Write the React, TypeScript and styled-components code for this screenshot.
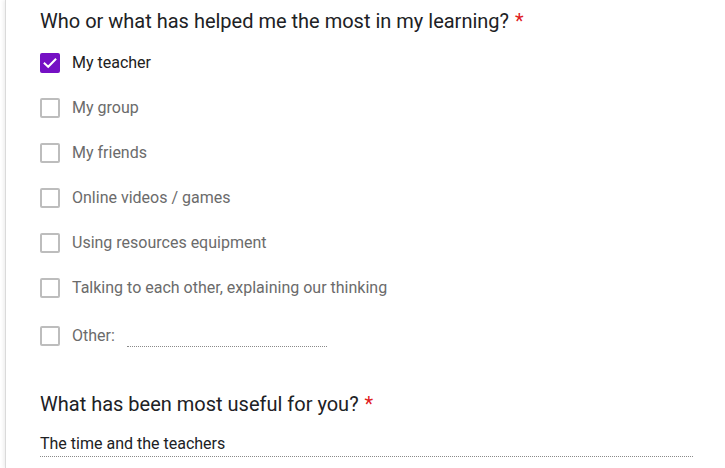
import React from "react";
import styled, { createGlobalStyle } from "styled-components";

const GlobalStyle = createGlobalStyle`
  html, body {
    margin: 0;
    padding: 0;
    background: #ffffff;
  }
  body {
    font-family: Roboto, "Liberation Sans", Arial, sans-serif;
    -webkit-font-smoothing: antialiased;
  }
`;

const Page = styled.div`
  width: 725px;
  height: 468px;
  overflow: hidden;
  padding-left: 5px;
  box-sizing: border-box;
  background: #ffffff;
`;

const Card = styled.div`
  height: 100%;
  background: #ffffff;
  border-left: 1px solid #dadada;
  box-shadow: -2px 0 3px rgba(0, 0, 0, 0.06);
  padding: 9px 0 0 34px;
  box-sizing: border-box;
`;

const Question = styled.div<{ $gap?: number }>`
  margin-top: ${(p) => p.$gap ?? 0}px;
`;

const Title = styled.div`
  font-size: 20px;
  line-height: 24px;
  color: #202124;
  font-weight: 400;
`;

const Required = styled.span`
  color: #e0201e;
  margin-left: 6px;
`;

const Options = styled.div`
  margin-top: 7px;
  display: flex;
  flex-direction: column;
`;

const Row = styled.label<{ $tall?: boolean }>`
  display: flex;
  align-items: center;
  height: ${(p) => (p.$tall ? 52 : 45)}px;
  cursor: pointer;
`;

const Box = styled.span<{ $checked?: boolean }>`
  width: 20px;
  height: 20px;
  box-sizing: border-box;
  border-radius: 2px;
  border: 2px solid ${(p) => (p.$checked ? "#7510c4" : "#bdbdbd")};
  background: ${(p) => (p.$checked ? "#7510c4" : "transparent")};
  display: flex;
  align-items: center;
  justify-content: center;
  flex-shrink: 0;
`;

const Label = styled.span<{ $checked?: boolean }>`
  margin-left: 12px;
  font-size: 16px;
  line-height: 20px;
  color: ${(p) => (p.$checked ? "#212121" : "#6b6b6b")};
`;

const OtherInput = styled.span`
  display: block;
  width: 200px;
  height: 22px;
  margin-left: 12px;
  border-bottom: 1px dotted #8a8a8a;
  box-sizing: border-box;
`;

const Answer = styled.div`
  margin-top: 18px;
  width: 653px;
  font-size: 16px;
  line-height: 20px;
  color: #202124;
  padding-bottom: 2px;
  border-bottom: 1px dotted #8a8a8a;
`;

const Check = () => (
  <svg width="16" height="16" viewBox="0 0 16 16">
    <path
      d="M2.6 8.4 L6.2 11.8 L13.4 4.4"
      fill="none"
      stroke="#ffffff"
      strokeWidth="2"
      strokeLinecap="square"
    />
  </svg>
);

const options = [
  { text: "My teacher", checked: true },
  { text: "My group" },
  { text: "My friends" },
  { text: "Online videos / games" },
  { text: "Using resources equipment" },
  { text: "Talking to each other, explaining our thinking" },
];

export default function App() {
  return (
    <>
      <GlobalStyle />
      <Page>
        <Card>
          <Question>
            <Title>
              Who or what has helped me the most in my learning?
              <Required>*</Required>
            </Title>
            <Options>
              {options.map((o) => (
                <Row key={o.text}>
                  <Box $checked={o.checked}>{o.checked && <Check />}</Box>
                  <Label $checked={o.checked}>{o.text}</Label>
                </Row>
              ))}
              <Row $tall>
                <Box />
                <Label>Other:</Label>
                <OtherInput />
              </Row>
            </Options>
          </Question>
          <Question $gap={30}>
            <Title>
              What has been most useful for you?
              <Required>*</Required>
            </Title>
            <Answer>The time and the teachers</Answer>
          </Question>
        </Card>
      </Page>
    </>
  );
}
